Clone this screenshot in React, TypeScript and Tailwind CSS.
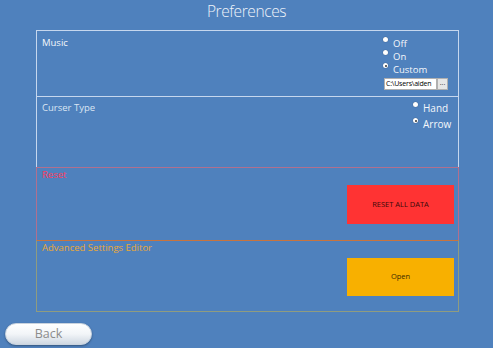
import React from "react";

function Radio({ label, checked, size = "text-[9.5px]" }: { label: string; checked?: boolean; size?: string }) {
  return (
    <div className="flex items-start h-[13px]">
      <span className="mt-[1px] w-[5px] h-[5px] rounded-full bg-white flex items-center justify-center shadow-[0_0_1px_rgba(0,0,0,0.5)]">
        {checked && <span className="w-[2px] h-[2px] rounded-full bg-[#333]" />}
      </span>
      <span className={`ml-[5px] leading-[13px] mt-[1px] text-[#f4f7fb] ${size}`}>{label}</span>
    </div>
  );
}

export default function App() {
  return (
    <div className="w-[493px] h-[348px] bg-[#4f81bd] overflow-hidden font-['Open_Sans',sans-serif]">
      <div className="h-[30px] flex justify-center">
        <span className="text-[15.5px] leading-[23px] text-[#eef3fa] font-light tracking-[-0.4px]">Preferences</span>
      </div>
      <div className="ml-[36px] w-[423px]">
        <div className="h-[67px] border border-[#c6d7ee] flex justify-between">
          <div className="pl-[5px] pt-[6px] text-[9.5px] leading-[12px] text-[#f4f7fb]">Music</div>
          <div className="w-[75px] pt-[5px] flex flex-col">
            <Radio label="Off" />
            <Radio label="On" />
            <Radio label="Custom" checked />
            <div className="flex mt-[3px] ml-[1px] h-[12px]">
              <div className="w-[53px] bg-white border border-[#b0b0b0] text-[7px] leading-[10px] pl-[1px] text-black overflow-hidden whitespace-nowrap tracking-[-0.2px]">C:\Users\aiden</div>
              <div className="w-[11px] bg-[#e6e6e6] border border-[#b0b0b0] text-[7px] leading-[8px] text-[#333] flex justify-center">...</div>
            </div>
          </div>
        </div>
        <div className="h-[70px] border-x border-[#c6d7ee] flex justify-between">
          <div className="pl-[5px] pt-[5px] text-[9.5px] leading-[12px] text-[#dbe6f3]">Curser Type</div>
          <div className="w-[45px] pt-[4px] flex flex-col gap-[3px]">
            <Radio label="Hand" size="text-[10px] text-[#dce6f4]" />
            <Radio label="Arrow" checked size="text-[10px] text-[#dce6f4]" />
          </div>
        </div>
        <div className="h-[73px] border-t border-x border-[#b0708f] flex justify-between">
          <div className="pl-[5px] pt-[1px] text-[9.5px] leading-[12px] text-[#ff3b5c]">Reset</div>
          <div className="pt-[17px] pr-[4px]">
            <div className="w-[107px] h-[39px] bg-[#ff3333] flex items-center justify-center text-[7.5px] text-[#3a0a0a]">RESET ALL DATA</div>
          </div>
        </div>
        <div className="h-[72px] border-t border-t-[#c8743f] border-x border-b border-x-[#8f9c80] border-b-[#8f9c80] flex justify-between">
          <div className="pl-[5px] pt-[1px] text-[9.5px] leading-[12px] text-[#e8a838]">Advanced Settings Editor</div>
          <div className="pt-[17px] pr-[4px]">
            <div className="w-[107px] h-[38px] bg-[#f8b000] flex items-center justify-center text-[7.5px] text-[#3a2a00]">Open</div>
          </div>
        </div>
      </div>
      <div className="ml-[5px] mt-[11px] w-[87px] h-[22px] rounded-full border border-[#c9d3de] bg-gradient-to-b from-white via-[#f2f5f8] to-[#cfd8e2] shadow-[0_1px_2px_rgba(0,0,0,0.35)] flex items-center justify-center">
        <span className="text-[12.5px] text-[#8c8c8c] leading-none">Back</span>
      </div>
    </div>
  );
}
